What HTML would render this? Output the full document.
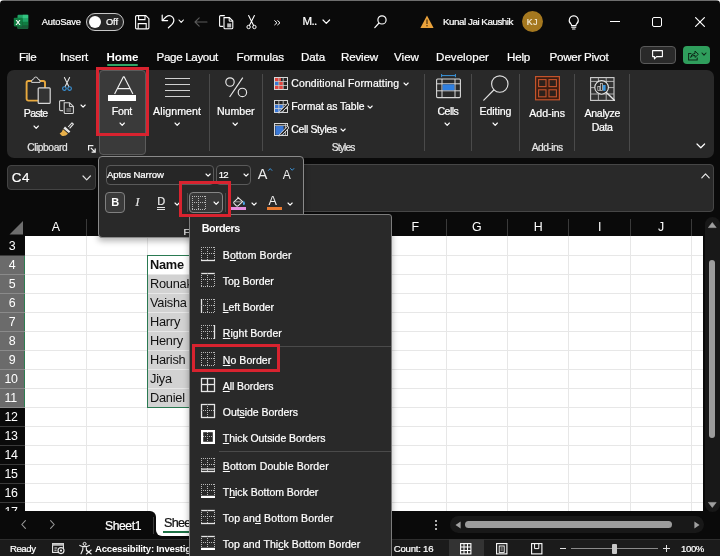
<!DOCTYPE html>
<html><head><meta charset="utf-8"><title>Excel</title>
<style>
*{box-sizing:border-box;margin:0;padding:0}
html,body{width:720px;height:556px;overflow:hidden;background:#0a0a0a}
body{position:relative;font-family:"Liberation Sans",sans-serif;color:#fff;font-size:12px}
.a{position:absolute}
.t{position:absolute;white-space:nowrap;line-height:1;-webkit-text-stroke:0.22px currentColor}
.t u{text-decoration:underline;text-underline-offset:1px}
svg{position:absolute;overflow:visible}
</style></head><body>
<div id="root" style="position:absolute;left:0;top:0;width:720px;height:556px;will-change:transform;">
<div class="a" style="left:0px;top:0px;width:720px;height:556px;background:#0a0a0a;"></div>
<div class="a" style="left:0px;top:0px;width:720px;height:1px;background:#6e6e6e;"></div>
<svg style="left:0px;top:0px" width="4" height="4" viewBox="0 0 4 4"><path d="M0 0 H4 A4 4 0 0 0 0 4 Z" fill="#fff"/></svg>
<svg style="left:716px;top:0px" width="4" height="4" viewBox="0 0 4 4"><path d="M4 0 H0 A4 4 0 0 1 4 4 Z" fill="#fff"/></svg>
<svg style="left:13px;top:14px" width="16" height="16" viewBox="0 0 16 16">
<rect x="4.5" y="0.8" width="10.7" height="14" rx="1" fill="#21a366"/>
<rect x="9.8" y="0.8" width="5.4" height="3.6" fill="#33c481"/>
<rect x="9.8" y="4.4" width="5.4" height="3.5" fill="#21a366"/>
<rect x="4.5" y="4.4" width="5.3" height="3.5" fill="#107c41"/>
<rect x="4.5" y="7.9" width="10.7" height="6.9" fill="#185c37"/>
<rect x="9.8" y="7.9" width="5.4" height="3.4" fill="#107c41"/>
<rect x="0.8" y="3.8" width="8.6" height="8.6" rx="0.8" fill="#107c41"/>
<text x="5.1" y="10.9" font-family="Liberation Sans, sans-serif" font-size="7.6" font-weight="bold" fill="#fff" text-anchor="middle">X</text>
</svg>
<div class="t" style="left:41.80px;top:17.53px;font-size:9.3px;color:#fff;letter-spacing:-0.178px;">AutoSave</div>
<div class="a" style="left:86.3px;top:13.3px;width:38px;height:17.6px;background:#262626;border:1px solid #c8c8c8;border-radius:9px;"></div>
<div class="a" style="left:89px;top:16px;width:12px;height:12px;background:#fff;border-radius:6px;"></div>
<div class="t" style="left:105.90px;top:17.53px;font-size:9.3px;color:#fff;letter-spacing:-0.011px;">Off</div>
<svg style="left:135px;top:14.5px" width="14.5" height="14.5" viewBox="0 0 14.5 14.5"><path d="M1.2 0.6 H10.8 L13.9 3.7 V12.7 Q13.9 13.9 12.7 13.9 H1.8 Q0.6 13.9 0.6 12.7 V1.8 Q0.6 0.6 1.8 0.6 Z" fill="none" stroke="#fff" stroke-width="1.1"/>
<path d="M3.6 0.8 V4.6 H10 V0.8" fill="none" stroke="#fff" stroke-width="1.1"/>
<path d="M3.2 13.8 V8.6 H11.2 V13.8" fill="none" stroke="#fff" stroke-width="1.1"/></svg>
<svg style="left:160.5px;top:14px" width="14" height="14.5" viewBox="0 0 14 14.5"><path d="M1.2 1.2 V6.6 H6.6" fill="none" stroke="#fff" stroke-width="1.2" stroke-linecap="round" stroke-linejoin="round"/>
<path d="M1.4 6.4 L5.2 2.8 Q8.6 0.2 11.6 3.2 Q14.4 6.6 11 10.4 L7.4 13.8" fill="none" stroke="#fff" stroke-width="1.2" stroke-linecap="round"/></svg>
<svg style="left:178.10000000000002px;top:19.0px" width="6.4" height="4.4" viewBox="0 0 6.4 4.4"><path d="M1 1 L3.2 3.4 L5.4 1" fill="none" stroke="#fff" stroke-width="1.1" stroke-linecap="round" stroke-linejoin="round"/></svg>
<svg style="left:194px;top:17px" width="13.5" height="10" viewBox="0 0 13.5 10"><path d="M13 5 H1 M5.2 0.8 L1 5 L5.2 9.2" fill="none" stroke="#5a5a5a" stroke-width="1.1" stroke-linecap="round" stroke-linejoin="round"/></svg>
<svg style="left:218.5px;top:15px" width="15" height="14.5" viewBox="0 0 15 14.5"><path d="M4.2 11.4 H1.6 Q0.6 11.4 0.6 10.4 V1.6 Q0.6 0.6 1.6 0.6 H5.8" fill="none" stroke="#fff" stroke-width="1.1"/>
<path d="M5 2.6 H10.4 L13.8 6 V12.8 Q13.8 13.8 12.8 13.8 H6 Q5 13.8 5 12.8 Z" fill="none" stroke="#fff" stroke-width="1.1"/>
<path d="M10.2 2.8 V6.2 H13.6" fill="none" stroke="#fff" stroke-width="1"/>
<rect x="8.2" y="8.4" width="4" height="4" fill="#bdbdbd"/></svg>
<svg style="left:246px;top:15px" width="11" height="14.5" viewBox="0 0 11 14.5"><path d="M2.6 0.6 L7.6 10.6 M8.4 0.6 L3.4 10.6" stroke="#fff" stroke-width="1.1" stroke-linecap="round"/>
<circle cx="2.6" cy="12" r="1.7" fill="none" stroke="#fff" stroke-width="1"/>
<circle cx="8.4" cy="12" r="1.7" fill="none" stroke="#fff" stroke-width="1"/></svg>
<svg style="left:273.5px;top:19.5px" width="7" height="5.5" viewBox="0 0 7 5.5"><path d="M0.7 0.7 L3 2.75 L0.7 4.8 M3.7 0.7 L6 2.75 L3.7 4.8" fill="none" stroke="#fff" stroke-width="1" stroke-linecap="round" stroke-linejoin="round"/></svg>
<div class="t" style="left:302.50px;top:15.77px;font-size:11.5px;color:#fff;letter-spacing:-0.656px;">M..</div>
<svg style="left:322.0px;top:19.3px" width="8.6" height="5.4" viewBox="0 0 8.6 5.4"><path d="M1 1 L4.3 4.4 L7.6 1" fill="none" stroke="#fff" stroke-width="1.2" stroke-linecap="round" stroke-linejoin="round"/></svg>
<svg style="left:373.5px;top:15px" width="13" height="13.5" viewBox="0 0 13 13.5"><circle cx="8" cy="4.9" r="4.1" fill="none" stroke="#fff" stroke-width="1.15"/><path d="M5 8 L0.8 12.6" stroke="#fff" stroke-width="1.2" stroke-linecap="round"/></svg>
<svg style="left:419.5px;top:14.5px" width="14" height="13.5" viewBox="0 0 14 13.5"><path d="M7 0.6 L13.6 12.9 H0.4 Z" fill="#eaa23b"/><path d="M7 4.6 V9" stroke="#5a3a10" stroke-width="1.3"/><circle cx="7" cy="10.8" r="0.8" fill="#5a3a10"/></svg>
<div class="t" style="left:443.00px;top:16.90px;font-size:9.8px;color:#fff;letter-spacing:-0.465px;">Kunal Jai Kaushik</div>
<div class="a" style="left:522px;top:11.2px;width:21px;height:21px;background:#a5781f;border-radius:11px;"></div>
<div class="t" style="left:526.80px;top:17.92px;font-size:8.6px;color:#f4ecd8;letter-spacing:0.682px;">KJ</div>
<svg style="left:568px;top:14.5px" width="11.6" height="15" viewBox="0 0 12.5 16"><path d="M6.2 0.7 A5 5 0 0 1 9.2 9.6 Q8.6 10.2 8.6 11.4 H3.8 Q3.8 10.2 3.2 9.6 A5 5 0 0 1 6.2 0.7 Z" fill="none" stroke="#fff" stroke-width="1.15"/>
<path d="M4 13.2 H8.4 M4.8 15 H7.6" stroke="#fff" stroke-width="1.1" stroke-linecap="round"/></svg>
<div class="a" style="left:610px;top:21px;width:10px;height:1.2px;background:#fff;"></div>
<div class="a" style="left:652px;top:17px;width:10px;height:9.5px;border:1.2px solid #fff;border-radius:2px;"></div>
<svg style="left:695px;top:17px" width="10" height="10" viewBox="0 0 10 10"><path d="M0.6 0.6 L9.4 9.4 M9.4 0.6 L0.6 9.4" stroke="#fff" stroke-width="1.2" stroke-linecap="round"/></svg>
<div class="t" style="left:19.00px;top:51.48px;font-size:11.6px;color:#fff;letter-spacing:-0.298px;">File</div>
<div class="t" style="left:60.00px;top:51.48px;font-size:11.6px;color:#fff;letter-spacing:-0.168px;">Insert</div>
<div class="t" style="left:106.50px;top:51.48px;font-size:11.6px;color:#fff;letter-spacing:-0.057px;font-weight:bold;-webkit-text-stroke:0;">Home</div>
<div class="a" style="left:107px;top:64px;width:31px;height:2px;background:#2fa565;border-radius:1px;"></div>
<div class="t" style="left:156.50px;top:51.48px;font-size:11.6px;color:#fff;letter-spacing:-0.331px;">Page Layout</div>
<div class="t" style="left:236.50px;top:51.48px;font-size:11.6px;color:#fff;letter-spacing:-0.105px;">Formulas</div>
<div class="t" style="left:301.00px;top:51.48px;font-size:11.6px;color:#fff;letter-spacing:-0.125px;">Data</div>
<div class="t" style="left:341.00px;top:51.48px;font-size:11.6px;color:#fff;letter-spacing:-0.172px;">Review</div>
<div class="t" style="left:394.00px;top:51.48px;font-size:11.6px;color:#fff;letter-spacing:0.017px;">View</div>
<div class="t" style="left:436.00px;top:51.48px;font-size:11.6px;color:#fff;letter-spacing:0.014px;">Developer</div>
<div class="t" style="left:507.00px;top:51.48px;font-size:11.6px;color:#fff;letter-spacing:-0.214px;">Help</div>
<div class="t" style="left:549.50px;top:51.48px;font-size:11.6px;color:#fff;letter-spacing:-0.263px;">Power Pivot</div>
<div class="a" style="left:639.5px;top:45.5px;width:36px;height:18.5px;background:#2a2a2a;border:1px solid #5a5a5a;border-radius:4px;"></div>
<svg style="left:652px;top:50px" width="11" height="10" viewBox="0 0 11 10"><path d="M0.6 0.6 H10.4 V6.6 H4.6 L2.4 8.8 V6.6 H0.6 Z" fill="none" stroke="#fff" stroke-width="1.1" stroke-linejoin="round"/></svg>
<div class="a" style="left:682.5px;top:45.5px;width:27.5px;height:18.5px;background:#2f9e5c;border-radius:4px;"></div>
<svg style="left:688px;top:49.5px" width="11" height="10.5" viewBox="0 0 11 10.5"><path d="M3.4 3.4 H0.6 V9.9 H9.2 V7.4" fill="none" stroke="#0d2a18" stroke-width="1.05"/>
<path d="M2.6 7.4 Q3.2 3.6 7 3.4 V1 L10.4 4.3 L7 7.4 V5.4 Q4.4 5.2 2.6 7.4 Z" fill="none" stroke="#0d2a18" stroke-width="1"/></svg>
<svg style="left:701.0px;top:52.4px" width="6" height="4.2" viewBox="0 0 6 4.2"><path d="M1 1 L3.0 3.2 L5 1" fill="none" stroke="#0d2a18" stroke-width="1.1" stroke-linecap="round" stroke-linejoin="round"/></svg>
<div class="a" style="left:7px;top:70px;width:706.5px;height:87.5px;background:#292929;border-radius:7px;"></div>
<div class="a" style="left:209px;top:74px;width:1px;height:77px;background:#4a4a4a;"></div>
<div class="a" style="left:262px;top:74px;width:1px;height:77px;background:#4a4a4a;"></div>
<div class="a" style="left:424px;top:74px;width:1px;height:77px;background:#4a4a4a;"></div>
<div class="a" style="left:471px;top:74px;width:1px;height:77px;background:#4a4a4a;"></div>
<div class="a" style="left:519px;top:74px;width:1px;height:77px;background:#4a4a4a;"></div>
<div class="a" style="left:574px;top:74px;width:1px;height:77px;background:#4a4a4a;"></div>
<div class="a" style="left:629px;top:74px;width:1px;height:77px;background:#4a4a4a;"></div>
<svg style="left:25px;top:76px" width="26" height="28" viewBox="0 0 26 28">
<rect x="1.6" y="5" width="18.4" height="19.6" rx="1.8" fill="none" stroke="#e8a93e" stroke-width="1.9"/>
<path d="M6.6 5.4 Q6.6 3.2 8.6 3.2 Q8.9 1 10.8 1 Q12.7 1 13 3.2 Q15 3.2 15 5.4 V6.4 H6.6 Z" fill="#292929" stroke="#d4d4d4" stroke-width="1"/>
<rect x="13.2" y="11.8" width="12" height="15.6" rx="1" fill="#333" stroke="#d8d8d8" stroke-width="1.2"/>
</svg>
<div class="t" style="left:23.80px;top:108.03px;font-size:10.6px;color:#fff;letter-spacing:-0.681px;">Paste</div>
<svg style="left:32.599999999999994px;top:124.85px" width="6.4" height="4.3" viewBox="0 0 6.4 4.3"><path d="M1 1 L3.2 3.3 L5.4 1" fill="none" stroke="#fff" stroke-width="1.1" stroke-linecap="round" stroke-linejoin="round"/></svg>
<svg style="left:62px;top:77px" width="10" height="14.5" viewBox="0 0 10 14.5"><path d="M2.4 0.5 L6.8 9.6 M7.6 0.5 L3.2 9.6" stroke="#e8e8e8" stroke-width="1.05" stroke-linecap="round"/>
<circle cx="2.4" cy="11.6" r="1.8" fill="none" stroke="#3a96dd" stroke-width="1.1"/>
<circle cx="7.6" cy="11.6" r="1.8" fill="none" stroke="#3a96dd" stroke-width="1.1"/></svg>
<svg style="left:58.5px;top:99.5px" width="15.5" height="14" viewBox="0 0 15.5 14"><path d="M4 10.6 H1.6 Q0.6 10.6 0.6 9.6 V1.6 Q0.6 0.6 1.6 0.6 H6" fill="none" stroke="#d8d8d8" stroke-width="1.05"/>
<path d="M5.2 2.8 H10.6 L14.4 6.4 V12.4 Q14.4 13.4 13.4 13.4 H6.2 Q5.2 13.4 5.2 12.4 Z" fill="none" stroke="#d8d8d8" stroke-width="1.05"/>
<path d="M10.4 3 V6.6 H14.2" fill="none" stroke="#d8d8d8" stroke-width="1"/>
<path d="M7.4 9 H12.2 M7.4 11 H12.2" stroke="#b0b0b0" stroke-width="0.9"/></svg>
<svg style="left:80.10000000000001px;top:104.2px" width="6.2" height="4.2" viewBox="0 0 6.2 4.2"><path d="M1 1 L3.1 3.2 L5.2 1" fill="none" stroke="#fff" stroke-width="1.1" stroke-linecap="round" stroke-linejoin="round"/></svg>
<svg style="left:58.8px;top:121.8px" width="15" height="14.5" viewBox="0 0 15 14.5"><path d="M9.2 5 L13 0.8 L14.4 2.2 L10.6 6.4" fill="none" stroke="#e8e8e8" stroke-width="1.1" stroke-linejoin="round"/>
<path d="M6 4.6 L11.4 9.4 L9.8 11 L4.4 6.4 Z" fill="#e8e8e8"/>
<path d="M4 7.2 L9 11.8 Q6.4 14.6 2.8 13.8 L0.6 11.4 Q3.2 10.4 4 7.2 Z" fill="#e8b04a"/></svg>
<div class="t" style="left:27.20px;top:142.87px;font-size:10.2px;color:#e6e6e6;letter-spacing:-0.406px;">Clipboard</div>
<svg style="left:87.5px;top:145px" width="8" height="8" viewBox="0 0 8 8"><path d="M0.6 5.4 V0.6 H5.4" fill="none" stroke="#f0f0f0" stroke-width="1.2"/><path d="M2.8 2.8 L7 7 M7.2 3.6 V7.2 H3.6" fill="none" stroke="#f0f0f0" stroke-width="1.2"/></svg>
<div class="a" style="left:98.7px;top:70px;width:47px;height:85px;background:#3a3a3a;border:1px solid #5c5c5c;border-radius:4px;"></div>
<svg style="left:113.5px;top:75.5px" width="19.5" height="18.5" viewBox="0 0 19.5 18.5"><path d="M0.6 18 L9.4 0.8 H10.1 L18.9 18 M3.4 12.6 H16.1" fill="none" stroke="#f0f0f0" stroke-width="1.15" stroke-linejoin="round"/></svg>
<div class="a" style="left:107.5px;top:95.2px;width:28.8px;height:6px;background:#fff;"></div>
<div class="t" style="left:111.80px;top:105.73px;font-size:10.6px;color:#fff;letter-spacing:-0.252px;">Font</div>
<svg style="left:118.6px;top:122.44999999999999px" width="6.4" height="4.3" viewBox="0 0 6.4 4.3"><path d="M1 1 L3.2 3.3 L5.4 1" fill="none" stroke="#fff" stroke-width="1.1" stroke-linecap="round" stroke-linejoin="round"/></svg>
<div class="a" style="left:164.5px;top:78.2px;width:25.5px;height:1.2px;background:#d0d0d0;"></div>
<div class="a" style="left:164.5px;top:84.2px;width:25.5px;height:1.2px;background:#d0d0d0;"></div>
<div class="a" style="left:164.5px;top:90.0px;width:25.5px;height:1.2px;background:#d0d0d0;"></div>
<div class="a" style="left:164.5px;top:95.80000000000001px;width:25.5px;height:1.2px;background:#d0d0d0;"></div>
<div class="t" style="left:153.00px;top:105.73px;font-size:10.6px;color:#fff;letter-spacing:0.118px;">Alignment</div>
<svg style="left:173.60000000000002px;top:122.44999999999999px" width="6.4" height="4.3" viewBox="0 0 6.4 4.3"><path d="M1 1 L3.2 3.3 L5.4 1" fill="none" stroke="#fff" stroke-width="1.1" stroke-linecap="round" stroke-linejoin="round"/></svg>
<svg style="left:225px;top:77px" width="22.5" height="20.5" viewBox="0 0 22.5 20.5"><circle cx="5" cy="5" r="4.2" fill="none" stroke="#e8e8e8" stroke-width="1.15"/>
<circle cx="17.4" cy="15.4" r="4.2" fill="none" stroke="#e8e8e8" stroke-width="1.15"/>
<path d="M17.8 0.6 L4.6 20" stroke="#e8e8e8" stroke-width="1.15"/></svg>
<div class="t" style="left:217.00px;top:105.73px;font-size:10.6px;color:#fff;letter-spacing:-0.033px;">Number</div>
<svg style="left:232.3px;top:122.44999999999999px" width="6.4" height="4.3" viewBox="0 0 6.4 4.3"><path d="M1 1 L3.2 3.3 L5.4 1" fill="none" stroke="#fff" stroke-width="1.1" stroke-linecap="round" stroke-linejoin="round"/></svg>
<svg style="left:273.8px;top:77.2px" width="15" height="14" viewBox="0 0 15 14"><rect x="0.5" y="0.5" width="13" height="12" fill="#242424" stroke="#d8d8d8" stroke-width="1"/>
<rect x="1" y="1" width="3.8" height="3.4" fill="#e0443e"/><rect x="5" y="1" width="2" height="3.4" fill="#e0443e"/>
<rect x="1" y="4.8" width="3.6" height="3.4" fill="#3a78d6"/><rect x="5" y="4.8" width="4" height="3.4" fill="#e0443e"/>
<rect x="1" y="8.8" width="8" height="3.2" fill="#e0443e"/>
<path d="M0.5 4.5 H13.5 M0.5 8.5 H13.5 M4.8 0.5 V12.5 M9.2 0.5 V12.5" stroke="#d0d0d0" stroke-width="0.8"/></svg>
<svg style="left:273.8px;top:100.4px" width="15" height="14" viewBox="0 0 15 14"><rect x="0.5" y="0.5" width="13" height="12" fill="#242424" stroke="#d8d8d8" stroke-width="1"/>
<rect x="1" y="4.9" width="8" height="7.2" fill="#3a78d6"/>
<path d="M0.5 4.5 H13.5 M0.5 8.5 H13.5 M4.8 0.5 V12.5 M9.2 0.5 V12.5" stroke="#d0d0d0" stroke-width="0.8"/><path d="M13.8 3 L6.6 10.2 L4.6 13 L8.4 11.8 L14.8 5 Z" fill="#292929" stroke="#e8e8e8" stroke-width="0.9" stroke-linejoin="round"/></svg>
<svg style="left:273.8px;top:123px" width="15" height="14" viewBox="0 0 15 14"><rect x="0.5" y="0.5" width="13" height="12" fill="#242424" stroke="#d8d8d8" stroke-width="1"/>
<rect x="1.4" y="3" width="8.2" height="8.8" fill="#3a78d6"/>
<path d="M0.5 2.4 H13.5 M11.4 0.5 V12.5" stroke="#d0d0d0" stroke-width="0.8"/><path d="M13.8 3 L6.6 10.2 L4.6 13 L8.4 11.8 L14.8 5 Z" fill="#292929" stroke="#e8e8e8" stroke-width="0.9" stroke-linejoin="round"/></svg>
<div class="t" style="left:291.30px;top:78.80px;font-size:10.4px;color:#fff;letter-spacing:0.154px;">Conditional Formatting</div>
<svg style="left:402.7px;top:81.7px" width="6.2" height="4.2" viewBox="0 0 6.2 4.2"><path d="M1 1 L3.1 3.2 L5.2 1" fill="none" stroke="#fff" stroke-width="1.1" stroke-linecap="round" stroke-linejoin="round"/></svg>
<div class="t" style="left:291.30px;top:102.00px;font-size:10.4px;color:#fff;letter-spacing:-0.078px;">Format as Table</div>
<svg style="left:367.4px;top:104.7px" width="6.2" height="4.2" viewBox="0 0 6.2 4.2"><path d="M1 1 L3.1 3.2 L5.2 1" fill="none" stroke="#fff" stroke-width="1.1" stroke-linecap="round" stroke-linejoin="round"/></svg>
<div class="t" style="left:291.30px;top:124.80px;font-size:10.4px;color:#fff;letter-spacing:-0.330px;">Cell Styles</div>
<svg style="left:340.2px;top:127.70000000000002px" width="6.2" height="4.2" viewBox="0 0 6.2 4.2"><path d="M1 1 L3.1 3.2 L5.2 1" fill="none" stroke="#fff" stroke-width="1.1" stroke-linecap="round" stroke-linejoin="round"/></svg>
<div class="t" style="left:331.80px;top:143.37px;font-size:10.2px;color:#e6e6e6;letter-spacing:-0.829px;">Styles</div>
<svg style="left:435.5px;top:73.5px" width="25" height="24.5" viewBox="0 0 25 24.5"><path d="M5.6 1.6 H19.4 M5.6 0 V3.2 M19.4 0 V3.2" stroke="#3a96dd" stroke-width="1"/>
<rect x="0.6" y="5" width="23.8" height="18.6" rx="1" fill="none" stroke="#d8d8d8" stroke-width="1.1"/>
<path d="M0.6 9.8 H24.4 M0.6 16.8 H24.4 M6 5 V23.6 M19 5 V23.6" stroke="#d8d8d8" stroke-width="1"/>
<rect x="6.6" y="10.4" width="11.8" height="5.8" fill="#2f7fe0"/></svg>
<div class="t" style="left:437.50px;top:106.03px;font-size:10.6px;color:#fff;letter-spacing:-0.552px;">Cells</div>
<svg style="left:444.3px;top:122.44999999999999px" width="6.4" height="4.3" viewBox="0 0 6.4 4.3"><path d="M1 1 L3.2 3.3 L5.4 1" fill="none" stroke="#fff" stroke-width="1.1" stroke-linecap="round" stroke-linejoin="round"/></svg>
<svg style="left:482.5px;top:75px" width="26" height="26" viewBox="0 0 26 26"><circle cx="16.8" cy="9" r="8.2" fill="none" stroke="#e0e0e0" stroke-width="1.15"/><path d="M10.8 15 L0.8 25.2" stroke="#e0e0e0" stroke-width="1.2" stroke-linecap="round"/></svg>
<div class="t" style="left:479.50px;top:106.03px;font-size:10.6px;color:#fff;letter-spacing:-0.087px;">Editing</div>
<svg style="left:491.8px;top:122.44999999999999px" width="6.4" height="4.3" viewBox="0 0 6.4 4.3"><path d="M1 1 L3.2 3.3 L5.4 1" fill="none" stroke="#fff" stroke-width="1.1" stroke-linecap="round" stroke-linejoin="round"/></svg>
<svg style="left:535px;top:76.4px" width="25" height="24.5" viewBox="0 0 25 24.5"><rect x="0.6" y="0.6" width="23.8" height="23.2" fill="#3b1d12" stroke="#c4532b" stroke-width="1.2"/>
<rect x="3.6" y="3.6" width="7.4" height="7" fill="#2c211c" stroke="#c4532b" stroke-width="1.1"/>
<rect x="14" y="3.6" width="7.4" height="7" fill="#2c211c" stroke="#c4532b" stroke-width="1.1"/>
<rect x="3.6" y="13.8" width="7.4" height="7" fill="#2c211c" stroke="#c4532b" stroke-width="1.1"/>
<rect x="14" y="13.8" width="7.4" height="7" fill="#2c211c" stroke="#c4532b" stroke-width="1.1"/></svg>
<div class="t" style="left:529.30px;top:108.13px;font-size:10.6px;color:#fff;letter-spacing:-0.034px;">Add-ins</div>
<div class="t" style="left:531.80px;top:143.47px;font-size:10.2px;color:#e6e6e6;letter-spacing:-0.540px;">Add-ins</div>
<svg style="left:590px;top:77px" width="25.5" height="24.5" viewBox="0 0 25.5 24.5"><rect x="0.6" y="0.6" width="23.4" height="22.8" fill="#333" stroke="#d0d0d0" stroke-width="1.1"/>
<path d="M0.6 4.4 H24 M0.6 10.6 H24 M0.6 17 H24 M8.4 0.6 V23.4 M16.2 0.6 V23.4" stroke="#bdbdbd" stroke-width="0.9"/>
<circle cx="11.6" cy="10.4" r="6.8" fill="#2b2b2b" stroke="#e6e6e6" stroke-width="1.1"/>
<rect x="7.8" y="9.6" width="2" height="4" fill="none" stroke="#d0d0d0" stroke-width="0.7"/>
<rect x="10.4" y="6.6" width="2" height="7" fill="none" stroke="#d0d0d0" stroke-width="0.7"/>
<rect x="13" y="8" width="2.6" height="5.8" fill="#3a96dd"/>
<path d="M16.4 15.4 L24.4 23.2" stroke="#e6e6e6" stroke-width="1.4" stroke-linecap="round"/></svg>
<div class="t" style="left:584.50px;top:108.13px;font-size:10.6px;color:#fff;letter-spacing:-0.316px;">Analyze</div>
<div class="t" style="left:591.80px;top:121.83px;font-size:10.6px;color:#fff;letter-spacing:-0.422px;">Data</div>
<svg style="left:695.8000000000001px;top:142.7px" width="9.6" height="5.8" viewBox="0 0 9.6 5.8"><path d="M1 1 L4.8 4.8 L8.6 1" fill="none" stroke="#fff" stroke-width="1.2" stroke-linecap="round" stroke-linejoin="round"/></svg>
<div class="a" style="left:7.3px;top:165.3px;width:89.2px;height:24.4px;background:#292929;border:1px solid #444;border-radius:4px;"></div>
<div class="t" style="left:11.80px;top:171.26px;font-size:13.4px;color:#fff;letter-spacing:0.636px;">C4</div>
<svg style="left:82.2px;top:174.7px" width="9.4" height="5.8" viewBox="0 0 9.4 5.8"><path d="M1 1 L4.7 4.8 L8.4 1" fill="none" stroke="#e0e0e0" stroke-width="1.2" stroke-linecap="round" stroke-linejoin="round"/></svg>
<div class="a" style="left:100px;top:164px;width:614px;height:47.6px;background:#292929;border:1px solid #464646;border-radius:4px;"></div>
<svg style="left:700.5px;top:172.5px" width="9" height="5.5" viewBox="0 0 9 5.5"><path d="M0.8 4.8 L4.5 0.9 L8.2 4.8" fill="none" stroke="#e6e6e6" stroke-width="1.2" stroke-linecap="round" stroke-linejoin="round"/></svg>
<div class="a" style="left:25px;top:236px;width:678px;height:275px;background:#fff;"></div>
<div class="a" style="left:147.6px;top:275.0px;width:120px;height:133.0px;background:#d2d2d2;"></div>
<div class="a" style="left:25px;top:255px;width:678px;height:1px;background:#e7e7e7;"></div>
<div class="a" style="left:25px;top:274px;width:678px;height:1px;background:#e7e7e7;"></div>
<div class="a" style="left:25px;top:293px;width:678px;height:1px;background:#e7e7e7;"></div>
<div class="a" style="left:25px;top:312px;width:678px;height:1px;background:#e7e7e7;"></div>
<div class="a" style="left:25px;top:331px;width:678px;height:1px;background:#e7e7e7;"></div>
<div class="a" style="left:25px;top:350px;width:678px;height:1px;background:#e7e7e7;"></div>
<div class="a" style="left:25px;top:369px;width:678px;height:1px;background:#e7e7e7;"></div>
<div class="a" style="left:25px;top:388px;width:678px;height:1px;background:#e7e7e7;"></div>
<div class="a" style="left:25px;top:407px;width:678px;height:1px;background:#e7e7e7;"></div>
<div class="a" style="left:25px;top:426px;width:678px;height:1px;background:#e7e7e7;"></div>
<div class="a" style="left:25px;top:445px;width:678px;height:1px;background:#e7e7e7;"></div>
<div class="a" style="left:25px;top:464px;width:678px;height:1px;background:#e7e7e7;"></div>
<div class="a" style="left:25px;top:483px;width:678px;height:1px;background:#e7e7e7;"></div>
<div class="a" style="left:25px;top:502px;width:678px;height:1px;background:#e7e7e7;"></div>
<div class="a" style="left:86px;top:236px;width:1px;height:275px;background:#e7e7e7;"></div>
<div class="a" style="left:147px;top:236px;width:1px;height:275px;background:#e7e7e7;"></div>
<div class="a" style="left:261px;top:236px;width:1px;height:275px;background:#e7e7e7;"></div>
<div class="a" style="left:323px;top:236px;width:1px;height:275px;background:#e7e7e7;"></div>
<div class="a" style="left:384px;top:236px;width:1px;height:275px;background:#e7e7e7;"></div>
<div class="a" style="left:446px;top:236px;width:1px;height:275px;background:#e7e7e7;"></div>
<div class="a" style="left:507px;top:236px;width:1px;height:275px;background:#e7e7e7;"></div>
<div class="a" style="left:568px;top:236px;width:1px;height:275px;background:#e7e7e7;"></div>
<div class="a" style="left:630px;top:236px;width:1px;height:275px;background:#e7e7e7;"></div>
<div class="a" style="left:691px;top:236px;width:1px;height:275px;background:#e7e7e7;"></div>
<div class="a" style="left:0px;top:217px;width:703px;height:19px;background:#0a0a0a;"></div>
<div class="a" style="left:86px;top:219px;width:1px;height:17px;background:#3a3a3a;"></div>
<div class="t" style="left:51.71px;top:221.30px;font-size:12.4px;color:#fff;-webkit-text-stroke:0;">A</div>
<div class="a" style="left:147px;top:219px;width:1px;height:17px;background:#3a3a3a;"></div>
<div class="a" style="left:261px;top:219px;width:1px;height:17px;background:#3a3a3a;"></div>
<div class="a" style="left:323px;top:219px;width:1px;height:17px;background:#3a3a3a;"></div>
<div class="a" style="left:384px;top:219px;width:1px;height:17px;background:#3a3a3a;"></div>
<div class="a" style="left:446px;top:219px;width:1px;height:17px;background:#3a3a3a;"></div>
<div class="t" style="left:411.61px;top:221.30px;font-size:12.4px;color:#fff;-webkit-text-stroke:0;">F</div>
<div class="a" style="left:507px;top:219px;width:1px;height:17px;background:#3a3a3a;"></div>
<div class="t" style="left:471.98px;top:221.30px;font-size:12.4px;color:#fff;-webkit-text-stroke:0;">G</div>
<div class="a" style="left:568px;top:219px;width:1px;height:17px;background:#3a3a3a;"></div>
<div class="t" style="left:533.72px;top:221.30px;font-size:12.4px;color:#fff;-webkit-text-stroke:0;">H</div>
<div class="a" style="left:630px;top:219px;width:1px;height:17px;background:#3a3a3a;"></div>
<div class="t" style="left:597.88px;top:221.30px;font-size:12.4px;color:#fff;-webkit-text-stroke:0;">I</div>
<div class="a" style="left:691px;top:219px;width:1px;height:17px;background:#3a3a3a;"></div>
<div class="t" style="left:657.90px;top:221.30px;font-size:12.4px;color:#fff;-webkit-text-stroke:0;">J</div>
<svg style="left:9px;top:219.5px" width="15" height="15" viewBox="0 0 15 15"><path d="M0.5 14.5 H14 V1 Z" fill="#6e6e6e"/></svg>
<div class="a" style="left:0px;top:236px;width:25px;height:275px;background:#0a0a0a;"></div>
<div class="a" style="left:0px;top:256.0px;width:25px;height:152.0px;background:#6b6b6b;"></div>
<div class="a" style="left:24px;top:256.0px;width:1.4px;height:152.0px;background:#2d7d50;"></div>
<div class="t" style="left:8.70px;top:240.30px;font-size:12.4px;color:#fff;letter-spacing:-0.400px;-webkit-text-stroke:0;">3</div>
<div class="a" style="left:0px;top:255px;width:25px;height:1px;background:#3a3a3a;"></div>
<div class="t" style="left:8.70px;top:259.30px;font-size:12.4px;color:#fff;letter-spacing:-0.400px;-webkit-text-stroke:0;">4</div>
<div class="a" style="left:0px;top:274px;width:25px;height:1px;background:#8a8a8a;"></div>
<div class="t" style="left:8.70px;top:278.30px;font-size:12.4px;color:#fff;letter-spacing:-0.400px;-webkit-text-stroke:0;">5</div>
<div class="a" style="left:0px;top:293px;width:25px;height:1px;background:#8a8a8a;"></div>
<div class="t" style="left:8.70px;top:297.30px;font-size:12.4px;color:#fff;letter-spacing:-0.400px;-webkit-text-stroke:0;">6</div>
<div class="a" style="left:0px;top:312px;width:25px;height:1px;background:#8a8a8a;"></div>
<div class="t" style="left:8.70px;top:316.30px;font-size:12.4px;color:#fff;letter-spacing:-0.400px;-webkit-text-stroke:0;">7</div>
<div class="a" style="left:0px;top:331px;width:25px;height:1px;background:#8a8a8a;"></div>
<div class="t" style="left:8.70px;top:335.30px;font-size:12.4px;color:#fff;letter-spacing:-0.400px;-webkit-text-stroke:0;">8</div>
<div class="a" style="left:0px;top:350px;width:25px;height:1px;background:#8a8a8a;"></div>
<div class="t" style="left:8.70px;top:354.30px;font-size:12.4px;color:#fff;letter-spacing:-0.400px;-webkit-text-stroke:0;">9</div>
<div class="a" style="left:0px;top:369px;width:25px;height:1px;background:#8a8a8a;"></div>
<div class="t" style="left:4.60px;top:373.30px;font-size:12.4px;color:#fff;letter-spacing:-0.400px;-webkit-text-stroke:0;">10</div>
<div class="a" style="left:0px;top:388px;width:25px;height:1px;background:#8a8a8a;"></div>
<div class="t" style="left:4.60px;top:392.30px;font-size:12.4px;color:#fff;letter-spacing:-0.400px;-webkit-text-stroke:0;">11</div>
<div class="a" style="left:0px;top:407px;width:25px;height:1px;background:#8a8a8a;"></div>
<div class="t" style="left:4.60px;top:411.30px;font-size:12.4px;color:#fff;letter-spacing:-0.400px;-webkit-text-stroke:0;">12</div>
<div class="a" style="left:0px;top:426px;width:25px;height:1px;background:#3a3a3a;"></div>
<div class="t" style="left:4.60px;top:430.30px;font-size:12.4px;color:#fff;letter-spacing:-0.400px;-webkit-text-stroke:0;">13</div>
<div class="a" style="left:0px;top:445px;width:25px;height:1px;background:#3a3a3a;"></div>
<div class="t" style="left:4.60px;top:449.30px;font-size:12.4px;color:#fff;letter-spacing:-0.400px;-webkit-text-stroke:0;">14</div>
<div class="a" style="left:0px;top:464px;width:25px;height:1px;background:#3a3a3a;"></div>
<div class="t" style="left:4.60px;top:468.30px;font-size:12.4px;color:#fff;letter-spacing:-0.400px;-webkit-text-stroke:0;">15</div>
<div class="a" style="left:0px;top:483px;width:25px;height:1px;background:#3a3a3a;"></div>
<div class="t" style="left:4.60px;top:487.30px;font-size:12.4px;color:#fff;letter-spacing:-0.400px;-webkit-text-stroke:0;">16</div>
<div class="a" style="left:0px;top:502px;width:25px;height:1px;background:#3a3a3a;"></div>
<div class="t" style="left:4.60px;top:506.30px;font-size:12.4px;color:#fff;letter-spacing:-0.400px;-webkit-text-stroke:0;">17</div>
<div class="a" style="left:148px;top:256.0px;width:113px;height:18.0px;background:#fff;"></div>
<div class="t" style="left:150.00px;top:259.16px;font-size:12.8px;color:#111;letter-spacing:-0.250px;font-weight:bold;-webkit-text-stroke:0;-webkit-text-stroke:0;">Name</div>
<div class="t" style="left:150.00px;top:278.16px;font-size:12.8px;color:#111;letter-spacing:-0.250px;-webkit-text-stroke:0;">Rounak</div>
<div class="t" style="left:150.00px;top:297.16px;font-size:12.8px;color:#111;letter-spacing:-0.250px;-webkit-text-stroke:0;">Vaisha</div>
<div class="t" style="left:150.00px;top:316.16px;font-size:12.8px;color:#111;letter-spacing:-0.250px;-webkit-text-stroke:0;">Harry</div>
<div class="t" style="left:150.00px;top:335.16px;font-size:12.8px;color:#111;letter-spacing:-0.250px;-webkit-text-stroke:0;">Henry</div>
<div class="t" style="left:150.00px;top:354.16px;font-size:12.8px;color:#111;letter-spacing:-0.250px;-webkit-text-stroke:0;">Harish</div>
<div class="t" style="left:150.00px;top:373.16px;font-size:12.8px;color:#111;letter-spacing:-0.250px;-webkit-text-stroke:0;">Jiya</div>
<div class="t" style="left:150.00px;top:392.16px;font-size:12.8px;color:#111;letter-spacing:-0.250px;-webkit-text-stroke:0;">Daniel</div>
<div class="a" style="left:147px;top:254.8px;width:1.3px;height:153.0px;background:#2a7a52;"></div>
<div class="a" style="left:147px;top:254.8px;width:120px;height:1.4px;background:#2a7a52;"></div>
<div class="a" style="left:147px;top:406.8px;width:120px;height:1.5px;background:#2a7a52;"></div>
<div class="a" style="left:703px;top:217px;width:17px;height:294px;background:#0a0a0a;"></div>
<div class="a" style="left:704.5px;top:217px;width:15.5px;height:294.5px;background:#181818;border-radius:8px 8px 8px 8px;"></div>
<svg style="left:707.6px;top:222px" width="8.6" height="6" viewBox="0 0 8.6 6"><path d="M4.3 0.5 L8.2 5.6 H0.4 Z" fill="#a0a0a0" stroke="#a0a0a0" stroke-width="0.6" stroke-linejoin="round"/></svg>
<svg style="left:707.6px;top:502.3px" width="8.6" height="6" viewBox="0 0 8.6 6"><path d="M4.3 5.5 L8.2 0.4 H0.4 Z" fill="#a0a0a0" stroke="#a0a0a0" stroke-width="0.6" stroke-linejoin="round"/></svg>
<div class="a" style="left:708.6px;top:259.5px;width:6.1px;height:178px;background:#9c9c9c;border-radius:3px;"></div>
<div class="a" style="left:156px;top:511px;width:547px;height:28px;background:#0a0a0a;"></div>
<div class="a" style="left:156px;top:505px;width:35px;height:31px;background:#fff;border-radius:0 0 0 6px;"></div>
<div class="a" style="left:148px;top:505px;width:10px;height:14px;background:#fff;"></div>
<div class="a" style="left:0px;top:511px;width:156px;height:28px;background:#0a0a0a;border-radius:0 6px 0 0;"></div>
<div class="a" style="left:153px;top:517px;width:1px;height:17px;background:#3c3c3c;"></div>
<div class="t" style="left:164.00px;top:516.73px;font-size:12.6px;color:#111;letter-spacing:-0.731px;">Shee</div>
<div class="a" style="left:163px;top:531px;width:28px;height:2px;background:#1f7246;"></div>
<div class="t" style="left:105.00px;top:519.67px;font-size:12.2px;color:#fff;letter-spacing:-0.444px;">Sheet1</div>
<svg style="left:20.5px;top:519.5px" width="5" height="9" viewBox="0 0 5 9"><path d="M4.4 0.6 L0.8 4.5 L4.4 8.4" fill="none" stroke="#9a9a9a" stroke-width="1.1" stroke-linecap="round" stroke-linejoin="round"/></svg>
<svg style="left:49.5px;top:519.5px" width="5" height="9" viewBox="0 0 5 9"><path d="M0.6 0.6 L4.2 4.5 L0.6 8.4" fill="none" stroke="#9a9a9a" stroke-width="1.1" stroke-linecap="round" stroke-linejoin="round"/></svg>
<div class="a" style="left:434.5px;top:519.9000000000001px;width:2.2px;height:2.2px;background:#e6e6e6;border-radius:1.1px;"></div>
<div class="a" style="left:434.5px;top:523.7px;width:2.2px;height:2.2px;background:#e6e6e6;border-radius:1.1px;"></div>
<div class="a" style="left:434.5px;top:527.5px;width:2.2px;height:2.2px;background:#e6e6e6;border-radius:1.1px;"></div>
<div class="a" style="left:449.5px;top:516px;width:254px;height:16.5px;background:#181818;border-radius:8.5px;"></div>
<svg style="left:454.5px;top:520.5px" width="6" height="8" viewBox="0 0 6 8"><path d="M0.5 4 L5.6 0.4 V7.6 Z" fill="#a0a0a0"/></svg>
<svg style="left:694px;top:520.5px" width="6" height="8" viewBox="0 0 6 8"><path d="M5.5 4 L0.4 0.4 V7.6 Z" fill="#a0a0a0"/></svg>
<div class="a" style="left:465px;top:520.7px;width:206.5px;height:7.2px;background:#9c9c9c;border-radius:3.6px;"></div>
<div class="a" style="left:0px;top:539px;width:720px;height:17px;background:#1b1b1b;"></div>
<div class="a" style="left:0px;top:539px;width:720px;height:1px;background:#2e2e2e;"></div>
<div class="t" style="left:10.00px;top:544.47px;font-size:9.6px;color:#fff;letter-spacing:-0.450px;">Ready</div>
<svg style="left:51.5px;top:543.3px" width="13" height="11.5" viewBox="0 0 13 11.5"><rect x="0.6" y="0.6" width="10.8" height="8.8" fill="none" stroke="#ececec" stroke-width="1.1"/>
<rect x="0.6" y="0.6" width="10.8" height="2.2" fill="#bdbdbd"/>
<path d="M2.4 5 H5.2 M2.4 7.2 H4.6" stroke="#ececec" stroke-width="1"/>
<circle cx="9" cy="7.6" r="3" fill="#1b1b1b" stroke="#ececec" stroke-width="1.1"/><circle cx="9" cy="7.6" r="1.1" fill="#ececec"/></svg>
<svg style="left:79px;top:542.3px" width="13" height="12.5" viewBox="0 0 13 12.5"><circle cx="5.6" cy="1.9" r="1.5" fill="none" stroke="#ececec" stroke-width="1"/>
<path d="M0.8 3.4 Q5.6 6 10.4 3.4 M3.8 5 V7.8 L2 11.8 M7.4 5 V7.8 L8.2 9.2" fill="none" stroke="#ececec" stroke-width="1.15" stroke-linecap="round" stroke-linejoin="round"/>
<path d="M7.4 8 L12.2 12 M12.2 8 L7.4 12" stroke="#ececec" stroke-width="1.1" stroke-linecap="round"/></svg>
<div class="t" style="left:95.00px;top:544.47px;font-size:9.6px;color:#fff;letter-spacing:-0.210px;font-weight:bold;-webkit-text-stroke:0;">Accessibility: Investig</div>
<div class="t" style="left:393.80px;top:544.27px;font-size:9.6px;color:#fff;letter-spacing:-0.236px;">Count: 16</div>
<div class="a" style="left:448.8px;top:539px;width:35px;height:17px;background:#333;"></div>
<svg style="left:460px;top:543px" width="11.5" height="11.5" viewBox="0 0 11.5 11.5"><rect x="0.6" y="0.6" width="10.3" height="10.3" fill="none" stroke="#fff" stroke-width="1.1"/><path d="M4 0.6 V11 M7.5 0.6 V11 M0.6 4 H11 M0.6 7.5 H11" stroke="#fff" stroke-width="1"/></svg>
<svg style="left:495.5px;top:543px" width="11.5" height="11.5" viewBox="0 0 11.5 11.5"><rect x="0.6" y="0.6" width="10.3" height="10.3" fill="none" stroke="#fff" stroke-width="1.1"/><rect x="3.2" y="3" width="5" height="6.4" fill="none" stroke="#fff" stroke-width="0.9"/><path d="M4.6 5 H6.8 M4.6 7 H6.8" stroke="#fff" stroke-width="0.7"/></svg>
<svg style="left:531px;top:543px" width="11.5" height="11.5" viewBox="0 0 11.5 11.5"><rect x="0.6" y="0.6" width="10.3" height="10.3" fill="none" stroke="#fff" stroke-width="1.1"/><path d="M3.6 0.6 V5.6 H7.8 V0.6" fill="none" stroke="#fff" stroke-width="1"/></svg>
<div class="a" style="left:559.5px;top:548px;width:6.5px;height:1.1px;background:#e0e0e0;"></div>
<div class="a" style="left:571px;top:548px;width:86.5px;height:1.2px;background:#8a8a8a;"></div>
<div class="a" style="left:612.4px;top:543.5px;width:4.6px;height:10px;background:#c8c8c8;border-radius:1px;"></div>
<div class="a" style="left:662.5px;top:548px;width:7.5px;height:1.1px;background:#e0e0e0;"></div>
<div class="a" style="left:665.7px;top:544.8px;width:1.1px;height:7.5px;background:#e0e0e0;"></div>
<div class="t" style="left:681.00px;top:544.27px;font-size:9.6px;color:#fff;letter-spacing:-0.388px;">100%</div>
<div class="a" style="left:98.2px;top:155.5px;width:205.8px;height:82.7px;background:#292929;border:1px solid #8a8a8a;border-radius:4px;box-shadow:0 3px 6px rgba(0,0,0,0.3);"></div>
<div class="a" style="left:105.5px;top:164.5px;width:108.3px;height:20.6px;background:#262626;border:1px solid #5a5a5a;border-radius:4px;"></div>
<div class="t" style="left:107.00px;top:170.47px;font-size:9.6px;color:#fff;letter-spacing:-0.113px;">Aptos Narrow</div>
<svg style="left:205.20000000000002px;top:173.1px" width="6.2" height="4.2" viewBox="0 0 6.2 4.2"><path d="M1 1 L3.1 3.2 L5.2 1" fill="none" stroke="#fff" stroke-width="1.1" stroke-linecap="round" stroke-linejoin="round"/></svg>
<div class="a" style="left:216.3px;top:164.5px;width:34.5px;height:20.6px;background:#262626;border:1px solid #5a5a5a;border-radius:4px;"></div>
<div class="t" style="left:218.80px;top:170.47px;font-size:9.6px;color:#fff;letter-spacing:-0.838px;">12</div>
<svg style="left:243.20000000000002px;top:173.1px" width="6.2" height="4.2" viewBox="0 0 6.2 4.2"><path d="M1 1 L3.1 3.2 L5.2 1" fill="none" stroke="#fff" stroke-width="1.1" stroke-linecap="round" stroke-linejoin="round"/></svg>
<div class="t" style="left:257.80px;top:167.21px;font-size:14.4px;color:#ececec;letter-spacing:0.795px;-webkit-text-stroke:0;">A</div>
<svg style="left:267.5px;top:167.5px" width="4.4" height="2.8" viewBox="0 0 4.4 2.8"><path d="M0.5 2.4 L2.2 0.6 L3.9 2.4" fill="none" stroke="#3a96dd" stroke-width="1" stroke-linecap="round" stroke-linejoin="round"/></svg>
<div class="t" style="left:282.80px;top:169.24px;font-size:12px;color:#ececec;letter-spacing:0.596px;-webkit-text-stroke:0;">A</div>
<svg style="left:290.3px;top:167.5px" width="4.4" height="2.8" viewBox="0 0 4.4 2.8"><path d="M0.5 0.5 L2.2 2.3 L3.9 0.5" fill="none" stroke="#3a96dd" stroke-width="1" stroke-linecap="round" stroke-linejoin="round"/></svg>
<div class="a" style="left:105.2px;top:192px;width:20.2px;height:20.6px;background:#3a3a3a;border:1px solid #808080;border-radius:4px;"></div>
<div class="t" style="left:111.30px;top:197.29px;font-size:11px;color:#fff;font-weight:bold;-webkit-text-stroke:0;">B</div>
<div class="t" style="left:135.5px;top:196.6px;font-size:11.6px;font-family:'Liberation Serif',serif;font-style:italic;color:#e8e8e8">I</div>
<div class="t" style="left:157.30px;top:196.09px;font-size:11px;color:#e8e8e8;">D</div>
<div class="a" style="left:157px;top:207px;width:8.2px;height:0.9px;background:#e0e0e0;"></div>
<div class="a" style="left:157px;top:209px;width:8.2px;height:0.9px;background:#e0e0e0;"></div>
<svg style="left:174.4px;top:201.5px" width="6.2" height="4.2" viewBox="0 0 6.2 4.2"><path d="M1 1 L3.1 3.2 L5.2 1" fill="none" stroke="#fff" stroke-width="1.1" stroke-linecap="round" stroke-linejoin="round"/></svg>
<div class="a" style="left:189px;top:192px;width:34px;height:21px;background:#383838;border:1px solid #858585;border-radius:4px;"></div>
<div class="a" style="left:186.5px;top:193px;width:1px;height:19px;background:#4a4a4a;"></div>
<svg style="left:192px;top:196px" width="14" height="14" viewBox="0 0 14 14"><path d="M0 0.5 L14.0 0.5" stroke="#b8b8b8" stroke-width="1" stroke-dasharray="1 1" fill="none"/><path d="M0 13.5 L14.0 13.5" stroke="#b8b8b8" stroke-width="1" stroke-dasharray="1 1" fill="none"/><path d="M0.5 0 L0.5 14.0" stroke="#b8b8b8" stroke-width="1" stroke-dasharray="1 1" fill="none"/><path d="M13.5 0 L13.5 14.0" stroke="#b8b8b8" stroke-width="1" stroke-dasharray="1 1" fill="none"/><path d="M0 6.5 L14.0 6.5" stroke="#b8b8b8" stroke-width="1" stroke-dasharray="1 1" fill="none"/><path d="M6.5 0 L6.5 14.0" stroke="#b8b8b8" stroke-width="1" stroke-dasharray="1 1" fill="none"/></svg>
<svg style="left:213.0px;top:201.45px" width="6.4" height="4.3" viewBox="0 0 6.4 4.3"><path d="M1 1 L3.2 3.3 L5.4 1" fill="none" stroke="#fff" stroke-width="1.1" stroke-linecap="round" stroke-linejoin="round"/></svg>
<div class="a" style="left:225px;top:193px;width:1px;height:19px;background:#4a4a4a;"></div>
<svg style="left:232.5px;top:195.5px" width="13" height="11" viewBox="0 0 13 11"><path d="M4.4 0.8 L9.6 5.6 L5 9.8 Q4.2 10.4 3.4 9.8 L1 7.4 Q0.4 6.6 1 5.8 L5.6 1.6" fill="none" stroke="#e8e8e8" stroke-width="1.05" stroke-linejoin="round"/>
<path d="M2 5.8 H8.6" stroke="#bdbdbd" stroke-width="0.8"/>
<path d="M10.8 4.6 Q12.6 7.4 11.8 8.6 Q10.8 9.4 10 8.4 Q9.6 7.2 10.8 4.6 Z" fill="#4aa3e8"/></svg>
<div class="a" style="left:231px;top:206.5px;width:14.5px;height:3.2px;background:#e68ee0;"></div>
<svg style="left:251.20000000000002px;top:201.5px" width="6.2" height="4.2" viewBox="0 0 6.2 4.2"><path d="M1 1 L3.1 3.2 L5.2 1" fill="none" stroke="#fff" stroke-width="1.1" stroke-linecap="round" stroke-linejoin="round"/></svg>
<div class="t" style="left:268.60px;top:195.03px;font-size:12.6px;color:#ececec;letter-spacing:2.195px;-webkit-text-stroke:0;">A</div>
<div class="a" style="left:267px;top:206.5px;width:14.5px;height:3.2px;background:#ea7a30;"></div>
<svg style="left:287.4px;top:201.5px" width="6.2" height="4.2" viewBox="0 0 6.2 4.2"><path d="M1 1 L3.1 3.2 L5.2 1" fill="none" stroke="#fff" stroke-width="1.1" stroke-linecap="round" stroke-linejoin="round"/></svg>
<div class="t" style="left:183.60px;top:227.07px;font-size:9.6px;color:#e6e6e6;">F</div>
<div class="a" style="left:189px;top:213.6px;width:202.5px;height:350px;background:#292929;border:1px solid #7c7c7c;border-radius:3px 3px 0 0;box-shadow:0 3px 6px rgba(0,0,0,0.3);"></div>
<div class="t" style="left:201.70px;top:222.66px;font-size:10.8px;color:#fff;letter-spacing:-0.459px;font-weight:bold;-webkit-text-stroke:0;">Borders</div>
<div class="t" style="left:222.80px;top:249.91px;font-size:10.5px;color:#fff;letter-spacing:0.085px;">B<u>o</u>ttom Border</div>
<svg style="left:201px;top:247px" width="14" height="14" viewBox="0 0 14 14"><path d="M0 0.5 L14.0 0.5" stroke="#b8b8b8" stroke-width="1" stroke-dasharray="1 1" fill="none"/><path d="M0 13.5 L14.0 13.5" stroke="#e6e6e6" stroke-width="1.3" fill="none"/><path d="M0.5 0 L0.5 14.0" stroke="#b8b8b8" stroke-width="1" stroke-dasharray="1 1" fill="none"/><path d="M13.5 0 L13.5 14.0" stroke="#b8b8b8" stroke-width="1" stroke-dasharray="1 1" fill="none"/><path d="M0 6.5 L14.0 6.5" stroke="#b8b8b8" stroke-width="1" stroke-dasharray="1 1" fill="none"/><path d="M6.5 0 L6.5 14.0" stroke="#b8b8b8" stroke-width="1" stroke-dasharray="1 1" fill="none"/></svg>
<div class="t" style="left:222.80px;top:275.91px;font-size:10.5px;color:#fff;letter-spacing:-0.036px;">To<u>p</u> Border</div>
<svg style="left:201px;top:273px" width="14" height="14" viewBox="0 0 14 14"><path d="M0 0.5 L14.0 0.5" stroke="#e6e6e6" stroke-width="1.3" fill="none"/><path d="M0 13.5 L14.0 13.5" stroke="#b8b8b8" stroke-width="1" stroke-dasharray="1 1" fill="none"/><path d="M0.5 0 L0.5 14.0" stroke="#b8b8b8" stroke-width="1" stroke-dasharray="1 1" fill="none"/><path d="M13.5 0 L13.5 14.0" stroke="#b8b8b8" stroke-width="1" stroke-dasharray="1 1" fill="none"/><path d="M0 6.5 L14.0 6.5" stroke="#b8b8b8" stroke-width="1" stroke-dasharray="1 1" fill="none"/><path d="M6.5 0 L6.5 14.0" stroke="#b8b8b8" stroke-width="1" stroke-dasharray="1 1" fill="none"/></svg>
<div class="t" style="left:222.80px;top:301.91px;font-size:10.5px;color:#fff;letter-spacing:-0.086px;"><u>L</u>eft Border</div>
<svg style="left:201px;top:299px" width="14" height="14" viewBox="0 0 14 14"><path d="M0 0.5 L14.0 0.5" stroke="#b8b8b8" stroke-width="1" stroke-dasharray="1 1" fill="none"/><path d="M0 13.5 L14.0 13.5" stroke="#b8b8b8" stroke-width="1" stroke-dasharray="1 1" fill="none"/><path d="M0.5 0 L0.5 14.0" stroke="#e6e6e6" stroke-width="1.3" fill="none"/><path d="M13.5 0 L13.5 14.0" stroke="#b8b8b8" stroke-width="1" stroke-dasharray="1 1" fill="none"/><path d="M0 6.5 L14.0 6.5" stroke="#b8b8b8" stroke-width="1" stroke-dasharray="1 1" fill="none"/><path d="M6.5 0 L6.5 14.0" stroke="#b8b8b8" stroke-width="1" stroke-dasharray="1 1" fill="none"/></svg>
<div class="t" style="left:222.80px;top:327.91px;font-size:10.5px;color:#fff;letter-spacing:0.005px;"><u>R</u>ight Border</div>
<svg style="left:201px;top:325px" width="14" height="14" viewBox="0 0 14 14"><path d="M0 0.5 L14.0 0.5" stroke="#b8b8b8" stroke-width="1" stroke-dasharray="1 1" fill="none"/><path d="M0 13.5 L14.0 13.5" stroke="#b8b8b8" stroke-width="1" stroke-dasharray="1 1" fill="none"/><path d="M0.5 0 L0.5 14.0" stroke="#b8b8b8" stroke-width="1" stroke-dasharray="1 1" fill="none"/><path d="M13.5 0 L13.5 14.0" stroke="#e6e6e6" stroke-width="1.3" fill="none"/><path d="M0 6.5 L14.0 6.5" stroke="#b8b8b8" stroke-width="1" stroke-dasharray="1 1" fill="none"/><path d="M6.5 0 L6.5 14.0" stroke="#b8b8b8" stroke-width="1" stroke-dasharray="1 1" fill="none"/></svg>
<div class="t" style="left:222.80px;top:354.51px;font-size:10.5px;color:#fff;letter-spacing:0.072px;"><u>N</u>o Border</div>
<svg style="left:201px;top:352px" width="14" height="14" viewBox="0 0 14 14"><path d="M0 0.5 L14.0 0.5" stroke="#b8b8b8" stroke-width="1" stroke-dasharray="1 1" fill="none"/><path d="M0 13.5 L14.0 13.5" stroke="#b8b8b8" stroke-width="1" stroke-dasharray="1 1" fill="none"/><path d="M0.5 0 L0.5 14.0" stroke="#b8b8b8" stroke-width="1" stroke-dasharray="1 1" fill="none"/><path d="M13.5 0 L13.5 14.0" stroke="#b8b8b8" stroke-width="1" stroke-dasharray="1 1" fill="none"/><path d="M0 6.5 L14.0 6.5" stroke="#b8b8b8" stroke-width="1" stroke-dasharray="1 1" fill="none"/><path d="M6.5 0 L6.5 14.0" stroke="#b8b8b8" stroke-width="1" stroke-dasharray="1 1" fill="none"/></svg>
<div class="t" style="left:222.80px;top:380.71px;font-size:10.5px;color:#fff;letter-spacing:-0.077px;"><u>A</u>ll Borders</div>
<svg style="left:201px;top:378px" width="14" height="14" viewBox="0 0 14 14"><path d="M0 0.5 L14.0 0.5" stroke="#e6e6e6" stroke-width="1.3" fill="none"/><path d="M0 13.5 L14.0 13.5" stroke="#e6e6e6" stroke-width="1.3" fill="none"/><path d="M0.5 0 L0.5 14.0" stroke="#e6e6e6" stroke-width="1.3" fill="none"/><path d="M13.5 0 L13.5 14.0" stroke="#e6e6e6" stroke-width="1.3" fill="none"/><path d="M0 6.5 L14.0 6.5" stroke="#e6e6e6" stroke-width="1.3" fill="none"/><path d="M6.5 0 L6.5 14.0" stroke="#e6e6e6" stroke-width="1.3" fill="none"/></svg>
<div class="t" style="left:222.80px;top:406.91px;font-size:10.5px;color:#fff;letter-spacing:-0.058px;">Out<u>s</u>ide Borders</div>
<svg style="left:201px;top:404px" width="14" height="14" viewBox="0 0 14 14"><path d="M0 0.5 L14.0 0.5" stroke="#e6e6e6" stroke-width="1.3" fill="none"/><path d="M0 13.5 L14.0 13.5" stroke="#e6e6e6" stroke-width="1.3" fill="none"/><path d="M0.5 0 L0.5 14.0" stroke="#e6e6e6" stroke-width="1.3" fill="none"/><path d="M13.5 0 L13.5 14.0" stroke="#e6e6e6" stroke-width="1.3" fill="none"/><path d="M0 6.5 L14.0 6.5" stroke="#b8b8b8" stroke-width="1" stroke-dasharray="1 1" fill="none"/><path d="M6.5 0 L6.5 14.0" stroke="#b8b8b8" stroke-width="1" stroke-dasharray="1 1" fill="none"/></svg>
<div class="t" style="left:222.80px;top:432.91px;font-size:10.5px;color:#fff;letter-spacing:-0.065px;"><u>T</u>hick Outside Borders</div>
<svg style="left:201px;top:430px" width="14" height="14" viewBox="0 0 14 14"><path d="M0 6.5 L14.0 6.5" stroke="#b8b8b8" stroke-width="1" stroke-dasharray="1 1" fill="none"/><path d="M6.5 0 L6.5 14.0" stroke="#b8b8b8" stroke-width="1" stroke-dasharray="1 1" fill="none"/><path d="M0 1.1 L14 1.1" stroke="#fff" stroke-width="2.2" fill="none"/><path d="M0 12.9 L14 12.9" stroke="#fff" stroke-width="2.2" fill="none"/><path d="M1.1 0 L1.1 14" stroke="#fff" stroke-width="2.2" fill="none"/><path d="M12.9 0 L12.9 14" stroke="#fff" stroke-width="2.2" fill="none"/></svg>
<div class="t" style="left:222.80px;top:460.71px;font-size:10.5px;color:#fff;letter-spacing:0.106px;"><u>B</u>ottom Double Border</div>
<svg style="left:201px;top:458px" width="14" height="14" viewBox="0 0 14 14"><path d="M0 0.5 L14.0 0.5" stroke="#b8b8b8" stroke-width="1" stroke-dasharray="1 1" fill="none"/><path d="M0 13.5 L14.0 13.5" stroke="#e6e6e6" stroke-width="1.3" fill="none"/><path d="M0.5 0 L0.5 14.0" stroke="#b8b8b8" stroke-width="1" stroke-dasharray="1 1" fill="none"/><path d="M13.5 0 L13.5 14.0" stroke="#b8b8b8" stroke-width="1" stroke-dasharray="1 1" fill="none"/><path d="M0 6.5 L14.0 6.5" stroke="#b8b8b8" stroke-width="1" stroke-dasharray="1 1" fill="none"/><path d="M6.5 0 L6.5 14.0" stroke="#b8b8b8" stroke-width="1" stroke-dasharray="1 1" fill="none"/><path d="M0 11.1 L14.0 11.1" stroke="#e6e6e6" stroke-width="1.3" fill="none"/></svg>
<div class="t" style="left:222.80px;top:486.71px;font-size:10.5px;color:#fff;letter-spacing:-0.010px;">T<u>h</u>ick Bottom Border</div>
<svg style="left:201px;top:484px" width="14" height="14" viewBox="0 0 14 14"><path d="M0 0.5 L14.0 0.5" stroke="#b8b8b8" stroke-width="1" stroke-dasharray="1 1" fill="none"/><path d="M0.5 0 L0.5 14.0" stroke="#b8b8b8" stroke-width="1" stroke-dasharray="1 1" fill="none"/><path d="M13.5 0 L13.5 14.0" stroke="#b8b8b8" stroke-width="1" stroke-dasharray="1 1" fill="none"/><path d="M0 6.5 L14.0 6.5" stroke="#b8b8b8" stroke-width="1" stroke-dasharray="1 1" fill="none"/><path d="M6.5 0 L6.5 14.0" stroke="#b8b8b8" stroke-width="1" stroke-dasharray="1 1" fill="none"/><path d="M0 12.9 L14 12.9" stroke="#fff" stroke-width="2.2" fill="none"/></svg>
<div class="t" style="left:222.80px;top:512.71px;font-size:10.5px;color:#fff;letter-spacing:0.120px;">Top an<u>d</u> Bottom Border</div>
<svg style="left:201px;top:510px" width="14" height="14" viewBox="0 0 14 14"><path d="M0 0.5 L14.0 0.5" stroke="#e6e6e6" stroke-width="1.3" fill="none"/><path d="M0 13.5 L14.0 13.5" stroke="#e6e6e6" stroke-width="1.3" fill="none"/><path d="M0.5 0 L0.5 14.0" stroke="#b8b8b8" stroke-width="1" stroke-dasharray="1 1" fill="none"/><path d="M13.5 0 L13.5 14.0" stroke="#b8b8b8" stroke-width="1" stroke-dasharray="1 1" fill="none"/><path d="M0 6.5 L14.0 6.5" stroke="#b8b8b8" stroke-width="1" stroke-dasharray="1 1" fill="none"/><path d="M6.5 0 L6.5 14.0" stroke="#b8b8b8" stroke-width="1" stroke-dasharray="1 1" fill="none"/></svg>
<div class="t" style="left:222.80px;top:538.71px;font-size:10.5px;color:#fff;letter-spacing:0.064px;">Top and Thi<u>c</u>k Bottom Border</div>
<svg style="left:201px;top:536px" width="14" height="14" viewBox="0 0 14 14"><path d="M0 0.5 L14.0 0.5" stroke="#e6e6e6" stroke-width="1.3" fill="none"/><path d="M0.5 0 L0.5 14.0" stroke="#b8b8b8" stroke-width="1" stroke-dasharray="1 1" fill="none"/><path d="M13.5 0 L13.5 14.0" stroke="#b8b8b8" stroke-width="1" stroke-dasharray="1 1" fill="none"/><path d="M0 6.5 L14.0 6.5" stroke="#b8b8b8" stroke-width="1" stroke-dasharray="1 1" fill="none"/><path d="M6.5 0 L6.5 14.0" stroke="#b8b8b8" stroke-width="1" stroke-dasharray="1 1" fill="none"/><path d="M0 12.9 L14 12.9" stroke="#fff" stroke-width="2.2" fill="none"/></svg>
<div class="a" style="left:219px;top:346px;width:172px;height:1px;background:#4a4a4a;"></div>
<div class="a" style="left:219px;top:451.3px;width:172px;height:1px;background:#4a4a4a;"></div>
<div class="a" style="left:96.2px;top:67px;width:52.7px;height:68.5px;border:3px solid #d8232f;"></div>
<div class="a" style="left:179.4px;top:181.1px;width:51.5px;height:36px;border:3.3px solid #d8232f;"></div>
<div class="a" style="left:192.4px;top:343.6px;width:87.5px;height:28.7px;border:3px solid #d8232f;"></div>
</div>
</body></html>
